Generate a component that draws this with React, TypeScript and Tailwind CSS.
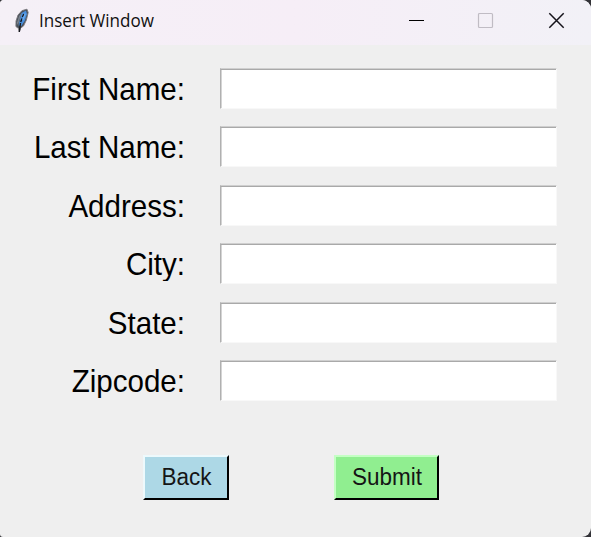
const fields = ["First Name:", "Last Name:", "Address:", "City:", "State:", "Zipcode:"];

function Feather() {
  return (
    <svg className="ml-[14px] h-[26px] w-[16px]" viewBox="0 0 16 26">
      <path d="M5.3 24 L4.5 20.5 L1.9 18.5 L2 13 L4 7 L8 2.6 L13 1.2 L14.2 4.5 L12.4 12 L9.5 18 L6.7 20 Z" fill="#4a5059" stroke="#77767c" strokeWidth="0.9" />
      <path d="M7.5 5 L12 2.6 L13 6 L10.7 13 L7.3 18 L4.5 17.5 L6 11 Z" fill="#4a8fdc" />
      <path d="M2.8 15 L5 8 L8 4.5 L5.8 11 L4 17 Z" fill="#77808c" />
      <path d="M9.8 6 L8.4 9 M8 10.5 L6.7 14 M6.5 15 L5.3 24" fill="none" stroke="#17191e" strokeWidth="1.4" />
      <path d="M11.3 5.5 L8.8 12" stroke="#70aef0" strokeWidth="1.2" />
    </svg>
  );
}

function TitleBar() {
  return (
    <header className="flex h-[45px] bg-linear-to-r from-[#f5f0f7] via-[#f6eef7] to-[#f2f1f7]">
      <div className="flex h-[41px] flex-1 items-center">
        <Feather />
        <span className="ml-[9px] origin-left scale-x-[0.975] whitespace-nowrap font-['Open_Sans','Noto_Sans',sans-serif] text-[17.5px] text-[#111]">
          Insert Window
        </span>
      </div>
      <div className="flex h-[41px] w-[209px] items-center">
        <button aria-label="Minimize" className="flex w-[69px] justify-center">
          <svg width="17" height="17" viewBox="0 0 17 17"><path d="M1 8.5H16" stroke="#000" /></svg>
        </button>
        <button aria-label="Maximize" className="flex w-[69px] justify-center">
          <svg width="17" height="17" viewBox="0 0 17 17"><rect x="1.5" y="1.5" width="14" height="14" rx="1" fill="none" stroke="#c0bcc4" strokeWidth="1.2" /></svg>
        </button>
        <button aria-label="Close" className="flex w-[71px] justify-center pl-[2px]">
          <svg width="17" height="17" viewBox="0 0 17 17"><path d="M1.3 1.3 15.7 15.7M15.7 1.3 1.3 15.7" stroke="#15131a" strokeWidth="1.5" /></svg>
        </button>
      </div>
    </header>
  );
}

export default function App() {
  return (
    <div className="h-[537px] w-[591px] bg-[#333338]">
      <main className="h-full overflow-hidden rounded-tl-[4px] rounded-tr-[9px] rounded-br-[9px] rounded-bl-[3px] bg-[#efefef] font-['Liberation_Sans',Arial,sans-serif] text-black">
        <TitleBar />
        <form className="pt-[23px]">
          <div className="flex flex-col gap-[17.4px]">
            {fields.map((label) => (
              <label key={label} className="flex h-[41px] items-center">
                <span className="w-[185px] origin-right scale-x-[0.985] scale-y-[1.05] text-right text-[30px] leading-[41px]">{label}</span>
                <input className="ml-[35px] h-[41px] w-[337px] border border-t-[#cfcfcf] border-r-[#f8f8f8] border-b-[#f8f8f8] border-l-[#b0b0b0] bg-white px-1 text-[30px] shadow-[inset_0_1px_0_#a9a9a9,inset_1px_0_0_#d4d4d4] outline-none" />
              </label>
            ))}
          </div>
          <div className="mt-[54px] flex pl-[143px]">
            <button type="button" className="h-[45px] w-[86px] border-2 border-t-[#edf9fc] border-r-black border-b-black border-l-[#edf9fc] bg-[#add8e6] text-[22.5px] text-[#151515]">
              <span className="block scale-y-[1.05] pl-px">Back</span>
            </button>
            <button type="button" className="ml-[105px] h-[45px] w-[105px] border-2 border-t-[#c4ffc4] border-r-black border-b-black border-l-[#c4ffc4] bg-[#90ee90] text-[22.5px] text-[#151515]">
              <span className="block scale-y-[1.05] pl-px">Submit</span>
            </button>
          </div>
        </form>
      </main>
    </div>
  );
}
